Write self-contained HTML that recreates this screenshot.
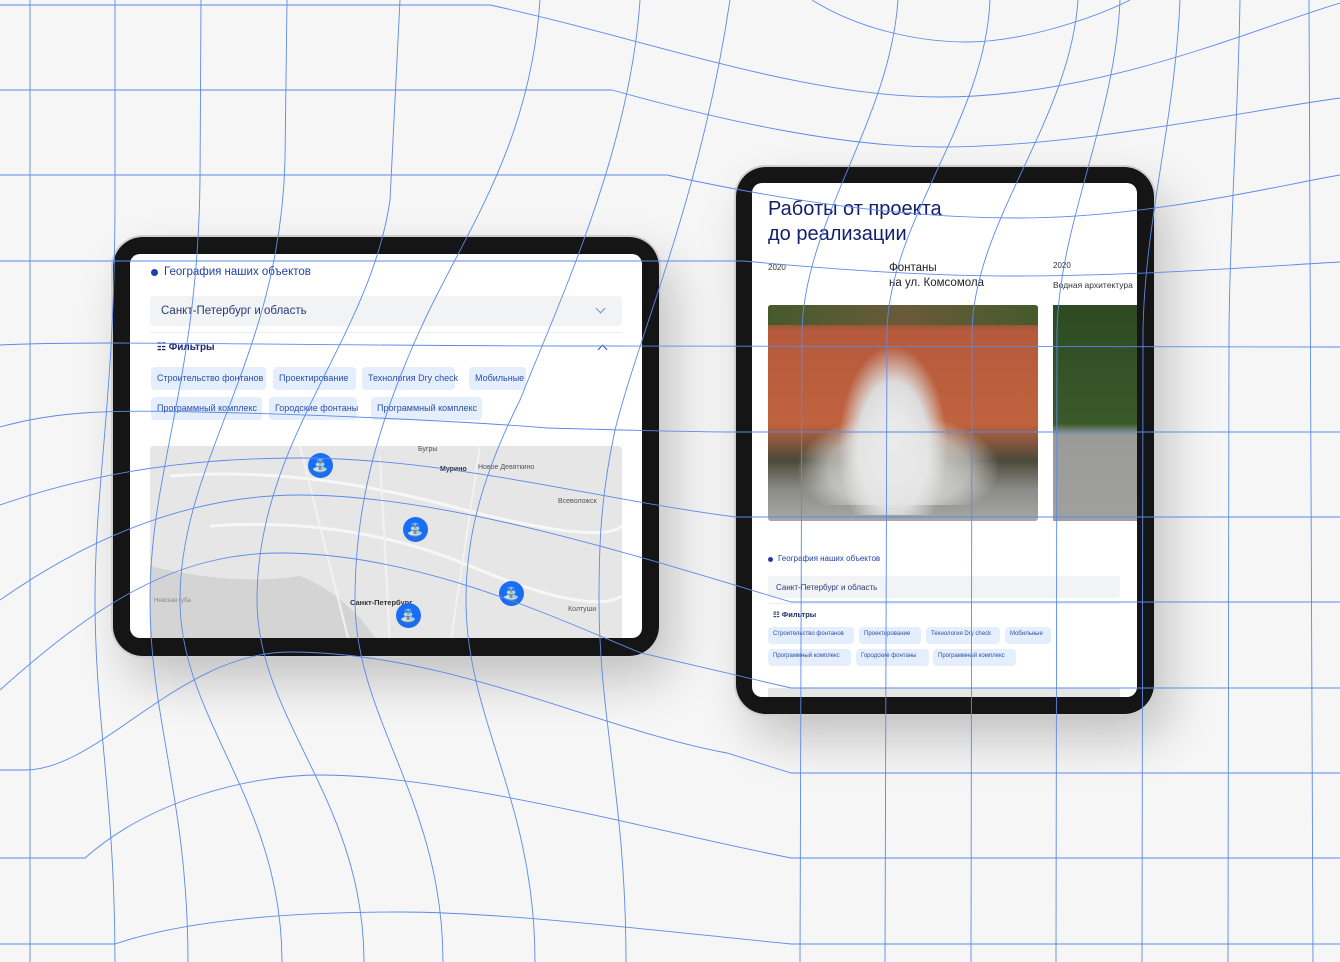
<!DOCTYPE html>
<html><head><meta charset="utf-8"><style>
*{margin:0;padding:0;box-sizing:border-box}
body{width:1340px;height:962px;background:#f6f6f6;position:relative;overflow:hidden;font-family:"Liberation Sans","Noto Sans CJK SC",sans-serif}
.tab{position:absolute;background:#151515;border-radius:30px;box-shadow:0 0 0 2px #cfcfcf,14px 24px 50px rgba(0,0,0,.22)}
.scr{position:absolute;background:#fff;border-radius:10px;overflow:hidden}
.blue{color:#1f3fa8}
.chip{position:absolute;background:#e4eefc;color:#2a4fa8;border-radius:4px;white-space:nowrap}
.pin{position:absolute;width:25px;height:25px;border-radius:50%;background:#1a6ef5;color:#fff;font-size:13px;text-align:center;line-height:25px}
svg.grid{position:absolute;left:0;top:0;pointer-events:none}
</style></head><body>

<div class="tab" style="left:113px;top:237px;width:546px;height:419px">
 <div class="scr" style="left:17px;top:17px;width:512px;height:384px">
  <div style="position:absolute;left:21px;top:15px;width:7px;height:7px;border-radius:50%;background:#1f3fa8"></div>
  <div class="blue" style="position:absolute;left:34px;top:12px;font-size:11.5px">География наших объектов</div>
  <div style="position:absolute;left:20px;top:42px;width:472px;height:30px;background:#f2f3f5;border-radius:4px"></div>
  <div style="position:absolute;left:31px;top:51px;font-size:11.5px;color:#2a3a7a">Санкт-Петербург и область</div>
  <div style="position:absolute;left:467px;top:51px;width:7px;height:7px;border-right:1.5px solid #6a90e0;border-bottom:1.5px solid #6a90e0;transform:rotate(45deg)"></div>
  <div style="position:absolute;left:20px;top:78px;width:472px;height:1px;background:#eee"></div>
  <div style="position:absolute;left:27px;top:88px;font-size:10px;font-weight:bold;color:#1b2a6a">☷ Фильтры</div>
  <div style="position:absolute;left:469px;top:92px;width:7px;height:7px;border-left:1.5px solid #2a4fa8;border-top:1.5px solid #2a4fa8;transform:rotate(45deg)"></div>
  <div class="chip" style="left:21px;top:113px;width:115px;height:23px;font-size:9px;padding:6px 6px">Строительство фонтанов</div>
  <div class="chip" style="left:143px;top:113px;width:83px;height:23px;font-size:9px;padding:6px 6px">Проектирование</div>
  <div class="chip" style="left:232px;top:113px;width:93px;height:23px;font-size:9px;padding:6px 6px">Технология Dry check</div>
  <div class="chip" style="left:339px;top:113px;width:57px;height:23px;font-size:9px;padding:6px 6px">Мобильные</div>
  <div class="chip" style="left:21px;top:143px;width:111px;height:23px;font-size:9px;padding:6px 6px">Программный комплекс</div>
  <div class="chip" style="left:139px;top:143px;width:88px;height:23px;font-size:9px;padding:6px 6px">Городские фонтаны</div>
  <div class="chip" style="left:241px;top:143px;width:111px;height:23px;font-size:9px;padding:6px 6px">Программный комплекс</div>
  <div style="position:absolute;left:20px;top:192px;width:472px;height:200px;background:#e6e6e6;border-radius:4px;overflow:hidden">
   <svg width="472" height="200" style="position:absolute;left:0;top:0">
    <path d="M0 120 Q80 140 150 130 Q200 150 230 200 L0 200Z" fill="#d4d4d4"/>
    <path d="M20 30 Q150 20 300 60 T472 80" stroke="#f7f7f7" stroke-width="3" fill="none"/>
    <path d="M60 80 Q200 70 320 120 T472 150" stroke="#f7f7f7" stroke-width="3" fill="none"/>
    <path d="M230 10 L240 200 M330 0 L300 200 M150 0 L200 200" stroke="#f2f2f2" stroke-width="2" fill="none"/>
   </svg>
   <span style="position:absolute;left:268px;top:0;font-size:7px;color:#555">Бугры</span>
   <span style="position:absolute;left:290px;top:20px;font-size:7px;color:#333;font-weight:bold">Мурино</span>
   <span style="position:absolute;left:328px;top:18px;font-size:7px;color:#555">Новое Девяткино</span>
   <span style="position:absolute;left:408px;top:52px;font-size:7px;color:#555">Всеволожск</span>
   <span style="position:absolute;left:200px;top:152px;font-size:7.5px;color:#333;font-weight:bold">Санкт-Петербург</span>
   <span style="position:absolute;left:418px;top:160px;font-size:7px;color:#555">Колтуши</span>
   <span style="position:absolute;left:4px;top:152px;font-size:6px;color:#888">Невская губа</span>
  </div>
  <div class="pin" style="left:178px;top:199px">⛲</div>
  <div class="pin" style="left:273px;top:263px">⛲</div>
  <div class="pin" style="left:369px;top:327px">⛲</div>
  <div class="pin" style="left:266px;top:349px">⛲</div>
 </div>
</div>

<div class="tab" style="left:736px;top:167px;width:418px;height:547px">
 <div class="scr" style="left:16px;top:16px;width:385px;height:514px">
  <div style="position:absolute;left:16px;top:14px;font-size:20px;line-height:25px;color:#14206a">Работы от проекта<br>до реализации</div>
  <div style="position:absolute;left:16px;top:80px;font-size:8px;color:#333">2020</div>
  <div style="position:absolute;left:137px;top:78px;font-size:11.5px;line-height:15px;color:#222">Фонтаны<br>на ул. Комсомола</div>
  <div style="position:absolute;left:301px;top:78px;font-size:8px;color:#333">2020</div>
  <div style="position:absolute;left:301px;top:97px;font-size:8.5px;color:#333;white-space:nowrap">Водная архитектура</div>
  <div style="position:absolute;left:16px;top:122px;width:270px;height:216px;border-radius:3px;overflow:hidden;background:linear-gradient(#3c4a2c 0,#b55a3c 12%,#c0623e 55%,#4a4a3a 72%,#8a8a86 85%,#a8a8a4 100%)">
   <div style="position:absolute;left:0;top:0;width:270px;height:20px;background:linear-gradient(90deg,#455a2c,#6a5a3a,#455a2c)"></div>
   <div style="position:absolute;left:70px;top:40px;width:110px;height:170px;background:radial-gradient(ellipse at 50% 60%,#f4f4f4 0,#dcdcdc 45%,rgba(220,220,220,0) 70%)"></div>
   <div style="position:absolute;left:30px;top:110px;width:200px;height:90px;background:radial-gradient(ellipse at 50% 60%,#e8e8e8 0,rgba(230,230,230,.6) 50%,rgba(230,230,230,0) 72%)"></div>
  </div>
  <div style="position:absolute;left:301px;top:122px;width:90px;height:216px;background:linear-gradient(#2d4a22 0,#3a5a2a 55%,#9a9a98 60%,#a0a09e 100%)"></div>
  <div style="position:absolute;left:16px;top:374px;width:5px;height:5px;border-radius:50%;background:#1f3fa8"></div>
  <div class="blue" style="position:absolute;left:26px;top:371px;font-size:8px">География наших объектов</div>
  <div style="position:absolute;left:16px;top:393px;width:352px;height:22px;background:#f2f3f5;border-radius:3px"></div>
  <div style="position:absolute;left:24px;top:400px;font-size:8px;color:#2a3a7a">Санкт-Петербург и область</div>
  <div style="position:absolute;left:16px;top:420px;width:352px;height:1px;background:#eee"></div>
  <div style="position:absolute;left:21px;top:427px;font-size:7.5px;font-weight:bold;color:#1b2a6a">☷ Фильтры</div>
  <div class="chip" style="left:16px;top:444px;width:86px;height:17px;font-size:6px;padding:4px 5px">Строительство фонтанов</div>
  <div class="chip" style="left:107px;top:444px;width:62px;height:17px;font-size:6px;padding:4px 5px">Проектирование</div>
  <div class="chip" style="left:174px;top:444px;width:74px;height:17px;font-size:6px;padding:4px 5px">Технология Dry check</div>
  <div class="chip" style="left:253px;top:444px;width:46px;height:17px;font-size:6px;padding:4px 5px">Мобильные</div>
  <div class="chip" style="left:16px;top:466px;width:83px;height:17px;font-size:6px;padding:4px 5px">Программный комплекс</div>
  <div class="chip" style="left:104px;top:466px;width:73px;height:17px;font-size:6px;padding:4px 5px">Городские фонтаны</div>
  <div class="chip" style="left:181px;top:466px;width:83px;height:17px;font-size:6px;padding:4px 5px">Программный комплекс</div>
  <div style="position:absolute;left:16px;top:505px;width:352px;height:20px;background:#e6e6e6"></div>
 </div>
</div>

<svg class="grid" width="1340" height="962" fill="none" stroke="#5b8ae8" stroke-width="0.9">
 <path d="M30 0 L30 962"/>
 <path d="M115 0 L115 200 C115 400 95 480 95 600 C95 720 115 800 115 962"/>
 <path d="M201 0 L200 180 C198 380 150 470 150 600 C150 720 188 800 188 962"/>
 <path d="M287 0 L285 160 C280 360 180 460 180 600 C180 720 282 800 282 962"/>
 <path d="M400 0 L390 200 C370 340 257 440 257 600 C257 720 364 800 364 962"/>
 <path d="M540 0 C530 150 460 240 420 330 C370 440 355 520 355 600 C355 720 443 800 443 962"/>
 <path d="M640 0 C630 150 560 300 520 400 C480 480 466 540 466 600 C466 720 535 800 535 962"/>
 <path d="M730 0 C700 200 640 330 615 430 C600 500 599 550 599 600 C599 720 626 800 626 962"/>
 <path d="M898 0 C890 120 805 220 802 330 L800 962"/>
 <path d="M990 0 C985 120 890 220 887 330 L885 962"/>
 <path d="M1078 0 C1070 120 975 220 972 330 L971 962"/>
 <path d="M1120 0 C1115 120 1060 220 1057 330 L1056 962"/>
 <path d="M1180 0 C1175 120 1145 220 1143 330 L1142 962"/>
 <path d="M1240 0 C1238 120 1230 220 1229 330 L1228 962"/>
 <path d="M1309 0 L1313 962"/>
 <path d="M0 5 L490 5 C650 40 800 97 940 97 C1100 97 1250 30 1340 3"/>
 <path d="M812 0 C860 30 920 42 967 42 C1020 42 1090 20 1130 0"/>
 <path d="M0 90 L612 90 C720 120 840 147 941 147 C1080 147 1250 110 1340 98"/>
 <path d="M0 175 L667 175 C780 200 900 218 1018 218 C1150 218 1280 185 1340 175"/>
 <path d="M0 261 L744 261 C860 272 950 276 1010 276 C1150 276 1280 265 1340 262"/>
 <path d="M0 345 C100 340 300 346 600 346 L1340 347"/>
 <path d="M0 427 C60 410 120 410 200 412 C350 415 500 424 548 428 C620 430 700 432 736 432 L1340 432"/>
 <path d="M0 505 C100 470 200 458 300 458 C450 458 600 500 736 517 L1340 517"/>
 <path d="M0 600 C100 530 200 495 300 495 C450 495 650 560 791 602 L1340 602"/>
 <path d="M0 690 C100 600 180 553 280 553 C420 553 560 620 641 653 L791 688 L1340 688"/>
 <path d="M0 770 L25 770 C100 770 180 652 290 652 C450 652 600 730 727 753 L791 773 L1340 773"/>
 <path d="M0 858 L85 858 C150 800 250 775 320 775 C450 775 650 830 791 858 L1340 858"/>
 <path d="M0 944 L115 944 C200 915 330 912 400 912 C500 912 650 930 791 944 L1340 944"/>
</svg>
</body></html>
